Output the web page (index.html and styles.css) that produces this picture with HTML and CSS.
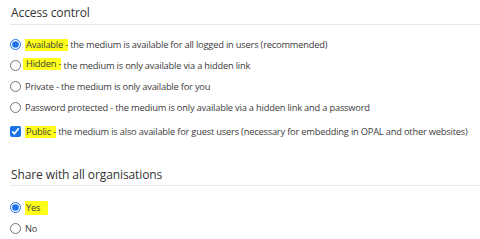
FILE: index.html
```html
<!DOCTYPE html>
<html>
<head>
<meta charset="utf-8">
<link rel="stylesheet" href="styles.css">
</head>
<body>
<section class="group">
  <h2 class="title">Access control</h2>
  <div class="options">
    <label class="opt"><input type="radio" name="a" checked><span><mark>Available -</mark> the medium is available for all logged in users (recommended)</span></label>
    <label class="opt"><input type="radio" name="a"><span><mark class="up">Hidden -</mark> the medium is only available via a hidden link</span></label>
    <label class="opt"><input type="radio" name="a"><span>Private - the medium is only available for you</span></label>
    <label class="opt"><input type="radio" name="a"><span>Password protected - the medium is only available via a hidden link and a password</span></label>
  </div>
  <label class="opt check"><input type="checkbox" checked><span><mark>Public -</mark> the medium is also available for guest users (necessary for embedding in OPAL and other websites)</span></label>
</section>
<section class="group second">
  <h2 class="title">Share with all organisations</h2>
  <div class="options">
    <label class="opt"><input type="radio" name="b" checked><span><mark class="wide">Yes</mark></span></label>
    <label class="opt"><input type="radio" name="b"><span>No</span></label>
  </div>
</section>
</body>
</html>
```
FILE: styles.css
```css
html, body { margin: 0; padding: 0; background: #fff; }
body {
  font-family: "Open Sans", "Liberation Sans", sans-serif;
  color: #3b3b3b;
  width: 480px;
  overflow: hidden;
}
.group { padding-left: 10px; }
.title {
  margin: 0;
  font-weight: 400;
  font-size: 12px;
  letter-spacing: -0.1px;
  line-height: 16px;
  padding: 5px 0 3px 1px;
  border-bottom: 1px solid #e8e8e8;
  color: #333;
}
.options { display: flex; flex-direction: column; padding-top: 9px; }
.opt {
  display: flex;
  align-items: center;
  height: 21px;
  font-size: 9.3px;
  letter-spacing: -0.2px;
  line-height: 12px;
  white-space: nowrap;
}
.opt input {
  margin: 0 4px 0 0;
  width: 11px;
  height: 11px;
  flex: none;
  accent-color: #1a73e8;
}
.opt.check { margin-top: 3px; }
mark {
  background: #ffff1a;
  color: inherit;
  padding: 0 0 0 1px;
  display: inline-block;
  line-height: 12px;
}
mark.up { position: relative; top: -2px; left: -2px; padding: 0 0 0 3px; margin-right: -2px; }
mark.wide { padding: 1px 8px 1px 1px; }
.second { margin-top: 20px; }
.second .title { padding-bottom: 2px; }
.second .options { padding-top: 11px; }
```
